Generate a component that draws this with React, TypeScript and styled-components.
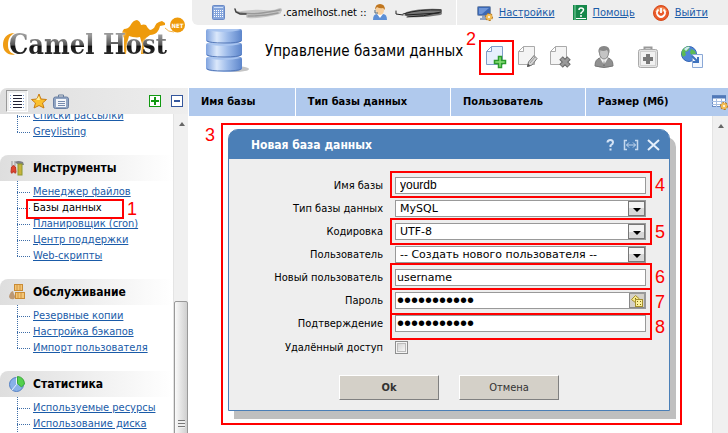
import React, { useState } from "react";
import styled, { createGlobalStyle, css } from "styled-components";

const ui = `"DejaVu Sans Condensed", "DejaVu Sans", sans-serif`;
const wide = `"DejaVu Sans", sans-serif`;

const Global = createGlobalStyle`
  *, *::before, *::after { box-sizing: border-box; }
  body { margin: 0; background: #fff; color: #000; font: 11px/16px ${ui}; }
  button { font: inherit; padding: 0; border: 0; background: none; color: inherit; cursor: pointer; }
  h1, h2, h3, ul { margin: 0; padding: 0; font-size: inherit; font-weight: inherit; list-style: none; }
  svg { display: block; flex: none; }
`;

const Page = styled.div`
  display: grid;
  grid-template-columns: 188px minmax(0, 1fr);
  grid-template-rows: 88px minmax(0, 1fr);
  column-gap: 1px;
  height: 100vh;
  overflow: hidden;
`;

/* Tutorial markers drawn over the parts they point at */
type Box = [number, number, number, number];
const Marker = styled.span<{ $box: Box }>`
  position: absolute;
  inset: ${(p) => p.$box.map((v) => `${v}px`).join(" ")};
  border: 2px solid #f00;
  pointer-events: none;
  z-index: 2;
`;
const Digit = styled.span<{ $side: "left" | "right" | "top" }>`
  position: absolute;
  color: #f00;
  font: 18px/20px "Liberation Sans", Arial, sans-serif;
  ${(p) => p.$side === "right" && css`left: 100%; top: 50%; margin: -10px 0 0 5px;`}
  ${(p) => p.$side === "left" && css`right: 100%; top: 0; margin-right: 8px;`}
  ${(p) => p.$side === "top" && css`right: 100%; top: -13px; margin-right: 5px;`}
`;
function Step({ n, box, side = "right" }: { n: number; box: Box; side?: "left" | "right" | "top" }) {
  return (
    <Marker $box={box}>
      <Digit $side={side}>{n}</Digit>
    </Marker>
  );
}

/* ---------- logo ---------- */
const Brand = styled.a`
  position: relative;
  display: flex;
  align-items: flex-end;
  padding: 0 0 27px 9px;
  text-decoration: none;
`;
const BrandText = styled.span`
  position: relative;
  font: bold 27px/32px "DejaVu Serif Condensed", "DejaVu Serif", serif;
  white-space: nowrap;
  background: linear-gradient(#999 20%, #555 50%, #111 54%, #333 85%);
  background-clip: text;
  color: transparent;
  filter: drop-shadow(0 0 1px #fff);
`;
const Camel = styled.svg`
  position: absolute;
  left: 0;
  top: 14px;
`;

function Logo() {
  return (
    <Brand href="#" aria-label="Camel Host .NET">
      <Camel width="188" height="46" viewBox="0 14 188 46">
        <path d="M15 33C6 33 3 39 3 45C3 51 8 56 15 54.500C10 53 8 50 8 45C8 39 10 35 15 33Z" fill="#ef9c14" />
        <path
          d="M122 34Q122 31 124 29Q128 29 130 26Q133 20 137 20Q140 21 141 25Q144 24 146 25Q148 29 150 30Q154 29 155 26Q156 23 159 22L162 21L165 23L165 25L160 26C159 31 156 35 150 35L146 38L144 42L144 54H141L142 44L140 37C137 38 132 37 129 36L127 44L126 54H124L124 45L124 38Z"
          fill="#ee9a0b"
        />
        <path d="M165 28Q168 32 174 32" stroke="#f4b54c" fill="none" />
        <circle cx="177.500" cy="25" r="7.500" fill="#ee9a0b" />
        <text x="177.500" y="27.500" fontSize="6" fontWeight="bold" textAnchor="middle" fill="#fff" fontFamily="DejaVu Sans Condensed">NET</text>
      </Camel>
      <BrandText>Camel Host</BrandText>
    </Brand>
  );
}

/* ---------- header ---------- */
const Header = styled.header`
  display: flex;
  flex-direction: column;
`;
const TopBar = styled.div`
  display: flex;
  gap: 1px;
  height: 25px;
  padding-left: 3px;
`;
const Account = styled.div`
  display: flex;
  align-items: center;
  flex: 0 1 264px;
  padding-left: 20px;
  background: #eee;
  border-bottom-left-radius: 6px;
  white-space: nowrap;
`;
const HostName = styled.span`
  display: flex;
  align-items: center;
  margin: 0 6px 0 8px;
`;
const Links = styled.nav`
  display: flex;
  align-items: center;
  justify-content: flex-end;
  gap: 18px;
  flex: 1;
  padding-right: 20px;
  background: #eee;
`;
const Link = styled.a`
  color: #1a5ba8;
`;
const IconLink = styled(Link)`
  display: flex;
  align-items: center;
  gap: 6px;
`;
const TitleRow = styled.div`
  display: flex;
  align-items: center;
  flex: 1;
  padding: 0 24px 11px 16px;
`;
const Title = styled.h1`
  flex: 1;
  margin-left: 12px;
  font-size: 15px;
  line-height: 20px;
  white-space: nowrap;
`;
const Tools = styled.div`
  display: flex;
  align-items: center;
  padding-top: 12px;
`;
const Tool = styled.button<{ $gap?: number }>`
  position: relative;
  display: flex;
  width: 24px;
  height: 24px;
  margin-left: ${(p) => p.$gap ?? 0}px;
`;

const Scribble = () => (
  <svg width="49" height="12" viewBox="0 0 49 12" fill="none" strokeLinecap="round">
    <path d="M8 6Q20 4 30 5T46 3M14 9Q26 10 45 5" stroke="#c6c6c6" strokeWidth="4" />
    <path d="M3 5Q14 8 28 6T46 3M14 9Q30 9 44 6" stroke="#999" strokeWidth="1.500" />
    <path d="M1 2L2 5L6 7L12 7" stroke="#444" strokeWidth="1.500" />
  </svg>
);
const DarkScribble = () => (
  <svg width="48" height="12" viewBox="0 0 48 12" fill="none" strokeLinecap="round">
    <path d="M12 7Q26 3 45 4M14 8Q28 9 45 6" stroke="#777" strokeWidth="4" />
    <path d="M1 4V7L8 8M8 7Q24 2 46 3M12 10Q28 10 46 5M10 8L44 6" stroke="#222" />
  </svg>
);
const Calculator = () => (
  <svg width="14" height="15" viewBox="0 0 14 15">
    <rect x=".5" y=".5" width="12" height="14" rx="1" fill="#86a6dc" stroke="#6a8ac6" />
    <path d="M2 2.500h9" stroke="#cfe0fa" />
    <path d="M2.500 5v8M4.500 5v8M6.500 5v8M8.500 5v8M10.500 5v8" stroke="#fff" strokeDasharray="1 1" />
  </svg>
);
const Operator = () => (
  <svg width="14" height="17" viewBox="0 0 14 17">
    <path d="M0 16Q0 10 4 10H10Q14 10 14 16Z" fill="#5d8fd6" />
    <path d="M4 10L7 14L10 10Z" fill="#fff" />
    <ellipse cx="7" cy="6" rx="4" ry="5" fill="#f7cf9d" />
    <path d="M2 6Q2 0 7 0Q12 0 12 6L10 4Q7 5 4 3Z" fill="#c0761f" />
    <path d="M2 6V9H5" stroke="#567" fill="none" />
  </svg>
);
const Gear = ({ x, y }: { x: number; y: number }) => (
  <g transform={`translate(${x} ${y})`}>
    <circle r="3" fill="#f5c566" stroke="#b9781d" strokeDasharray="2 1" strokeWidth="2" />
    <circle r="3" fill="#f3bd55" />
    <circle r="1" fill="#fff" />
  </g>
);
const Monitor = () => (
  <svg width="16" height="16" viewBox="0 0 16 16">
    <rect x=".5" y="1.500" width="13" height="9" rx="1" fill="#3b68b4" stroke="#7c8eaa" />
    <path d="M2 3H12L5 9H2Z" fill="#6d95d8" />
    <path d="M5 11H9V13H12V15H3V13H5Z" fill="#8fa3c2" />
    <Gear x={12} y={12} />
  </svg>
);
const HelpBook = () => (
  <svg width="14" height="15" viewBox="0 0 14 15">
    <rect width="14" height="15" fill="#16884a" />
    <path d="M2 0V15" stroke="#7dd39f" />
    <path d="M3 13.500H13" stroke="#fff" />
    <path d="M6 5Q6 3 8 3Q10.500 3 10.500 5Q10.500 6 8 8V9M8 10V12" stroke="#fff" strokeWidth="1.500" fill="none" />
  </svg>
);
const Power = () => (
  <svg width="16" height="16" viewBox="0 0 16 16">
    <circle cx="8" cy="8" r="7.500" fill="#ea5a2a" stroke="#d54b1c" />
    <path d="M2 7Q3 2 8 2Q13 2 14 7Z" fill="#f28a55" />
    <path d="M5.500 4.500Q3.500 6 4 8.500Q5 12 8 12Q11 12 12 8.500Q12.500 6 10.500 4.500M8 3V8" stroke="#fff" strokeWidth="1.800" fill="none" />
  </svg>
);
const Database = () => (
  <svg width="48" height="46" viewBox="0 0 48 46">
    <defs>
      <linearGradient id="cyl">
        <stop stopColor="#7fa3df" />
        <stop offset=".3" stopColor="#dbe8fb" />
        <stop offset=".6" stopColor="#9dbbea" />
        <stop offset="1" stopColor="#5c85cb" />
      </linearGradient>
    </defs>
    <ellipse cx="30" cy="41" rx="14" ry="3" fill="#c4c4c4" />
    {[29, 15, 1].map((y) => (
      <g key={y} transform={`translate(1 ${y})`}>
        <path d="M0 2Q0 0 2 0H34Q36 0 36 2V12Q33 15 18 15Q3 15 0 12Z" fill="url(#cyl)" />
        <path d="M1 1Q18 5 35 1Q33 0 31 0H5Q2 0 1 1Z" fill="#a9c5f0" />
        <path d="M1 12Q4 14 18 14Q32 14 35 12" stroke="#5377b8" fill="none" />
      </g>
    ))}
  </svg>
);
const Sheet = ({ tint, line }: { tint: string; line: string }) => (
  <path d="M7.500 1.500H18.500V19.500H2.500V6.500H7.500V1.500L2.500 6.500" fill={tint} stroke={line} strokeLinejoin="round" />
);
const NewPage = () => (
  <svg width="24" height="24" viewBox="0 0 24 24">
    <Sheet tint="#e6f0fd" line="#7f9dc8" />
    <path d="M14.500 11.500H17.500V15.500H21.500V18.500H17.500V22.500H14.500V18.500H10.500V15.500H14.500Z" fill="#8be07a" stroke="#2b9c2b" strokeWidth="1.500" />
  </svg>
);
const EditPage = () => (
  <svg width="24" height="24" viewBox="0 0 24 24">
    <Sheet tint="#f4f4f4" line="#aaa" />
    <path d="M11.500 21.500L12.500 17L18 10.500L21 13.500L16 20Z" fill="#d4d4d4" stroke="#777" />
    <path d="M14 18L19 12" stroke="#999" fill="none" />
    <path d="M11 22L12 18.500L14.500 21Z" fill="#555" />
  </svg>
);
const DeletePage = () => (
  <svg width="24" height="24" viewBox="0 0 24 24">
    <Sheet tint="#f4f4f4" line="#aaa" />
    <path d="M13 13L21 21M21 13L13 21" stroke="#666" strokeWidth="5" />
    <path d="M13.500 13.500L20.500 20.500M20.500 13.500L13.500 20.500" stroke="#999" strokeWidth="3" />
  </svg>
);
const Person = () => (
  <svg width="24" height="24" viewBox="0 0 24 24">
    <path d="M3 21Q3 14 8 13H16Q21 14 21 21Q12 24 3 21Z" fill="#919191" stroke="#777" />
    <path d="M8 13L12 20L16 13Z" fill="#f2f2f2" />
    <path d="M12 15L11 21H13Z" fill="#777" />
    <ellipse cx="12" cy="8" rx="4.500" ry="6" fill="#c4c4c4" stroke="#888" />
    <path d="M6.500 8Q5.500 1 12 1Q18.500 1 17.500 8L15 5Q11 7 8 5Z" fill="#888" />
  </svg>
);
const FirstAid = () => (
  <svg width="24" height="24" viewBox="0 0 24 24">
    <path d="M8.500 5V2.500H15.500V5" stroke="#999" strokeWidth="2" fill="none" />
    <rect x="2.500" y="4.500" width="19" height="18" rx="2" fill="#e4e4e4" stroke="#aaa" />
    <rect x="4.500" y="6.500" width="15" height="14" fill="#f1f1f1" stroke="#d0d0d0" />
    <path d="M10 9H14V12H17V16H14V19H10V16H7V12H10Z" fill="#777" />
  </svg>
);
const GlobePage = () => (
  <svg width="24" height="24" viewBox="0 0 24 24">
    <circle cx="9" cy="9" r="7.500" fill="#4f86d8" stroke="#3565b4" />
    <path d="M3 4Q7 0 10 2L8 6L5 7L6 10L3 12Q0 8 3 4ZM11 4L15 6L16 9L13 11L10 8Z" fill="#5cba54" />
    <path d="M4 4Q7 1 10 2L6 6Z" fill="#cfe6f6" />
    <path d="M12.500 9.500H22.500V22.500H12.500Z" fill="#f4f8fe" stroke="#8aa8d6" />
    <path d="M12 11L17 16M18 12V17H13" stroke="#3e72be" strokeWidth="2" fill="none" />
  </svg>
);

/* ---------- sidebar ---------- */
const Sidebar = styled.aside`
  display: flex;
  flex-direction: column;
  min-height: 0;
`;
const TabBar = styled.div`
  display: flex;
  align-items: center;
  flex: none;
  height: 26px;
  padding: 0 5px 0 6px;
  background: linear-gradient(90deg, #dedede, #eee);
  border-top-left-radius: 7px;
`;
const Tab = styled.button<{ $active?: boolean }>`
  display: grid;
  place-items: center;
  width: 22px;
  height: 22px;
  ${(p) =>
    p.$active &&
    css`
      background: #eee;
      border: 1px solid;
      border-color: #999 #fff #fff #999;
    `}
`;
const Squares = styled.div`
  display: flex;
  gap: 10px;
  margin-left: auto;
`;
const Square = styled.button<{ $color: string }>`
  display: grid;
  place-items: center;
  width: 12px;
  height: 12px;
  background: #fff;
  border: 1px solid ${(p) => p.$color};
`;
const SideBody = styled.div`
  display: flex;
  flex: 1;
  min-height: 0;
  overflow: hidden;
`;
const Tree = styled.nav`
  flex: 1;
  min-width: 0;
  margin-top: -9px;
`;
const Group = styled.section`
  margin-bottom: 15px;
`;
const GroupTitle = styled.h2`
  display: grid;
  grid-template-columns: 17px 1fr;
  justify-items: start;
  align-items: center;
  gap: 7px;
  height: 26px;
  padding-left: 9px;
  font-size: 12px;
  font-weight: bold;
  background: linear-gradient(90deg, #dedede, #fff);
  border-top-left-radius: 8px;
`;
const Items = styled.ul`
  padding: 3px 0 0 17px;
`;
const Item = styled.li<{ $open?: boolean }>`
  position: relative;
  display: flex;
  align-items: center;
  height: 16px;
  white-space: nowrap;
  &::before {
    content: "";
    width: 13px;
    margin-right: 3px;
    border-top: 1px dotted #3f6ea8;
  }
  &::after {
    content: "";
    position: absolute;
    left: 0;
    top: -3px;
    bottom: 0;
    border-left: 1px dotted #3f6ea8;
  }
  &:last-child::after {
    bottom: ${(p) => (p.$open ? "-16px" : "8px")};
  }
`;
const Current = styled(Link)`
  color: #000;
  text-decoration: none;
`;
const SideScroll = styled.div`
  display: flex;
  flex-direction: column;
  width: 15px;
  background: #f0f0f0;
  border-left: 1px solid #e4e4e4;
`;
const Arrow = styled.span`
  align-self: center;
  margin: 8px 0 0 1px;
  border: solid transparent;
  border-width: 0 3px 4px;
  border-bottom-color: #666;
`;
const Thumb = styled.span`
  display: grid;
  place-items: center;
  flex: none;
  height: 246px;
  margin-top: auto;
  margin-bottom: -114px;
  border: 1px solid #999;
  border-radius: 2px;
  background: linear-gradient(90deg, #fafafa, #e6e6e6 45%, #cfcfcf);
  &::after {
    content: "";
    width: 7px;
    height: 8px;
    background: repeating-linear-gradient(#777 0 1px, #eee 1px 3px);
  }
`;

const ListIcon = () => (
  <svg width="16" height="17" viewBox="0 0 16 17">
    <rect width="16" height="17" fill="#fff" />
    {[2, 5, 8, 11, 14].map((y) => (
      <path key={y} d={`M1 ${y}.5h1M14 ${y}.5h1`} stroke="#7b9bd0" />
    ))}
    {[2, 5, 8, 11, 14].map((y) => (
      <path key={`l${y}`} d={`M4 ${y}.5h9`} stroke="#223" />
    ))}
  </svg>
);
const StarIcon = () => (
  <svg width="16" height="16" viewBox="0 0 16 16">
    <path d="M8 1L10 6L15.500 6.500L11.500 10L13 15L8 12.500L3 15L4.500 10L.5 6.500L6 6Z" fill="#fbc02d" stroke="#c97c12" strokeLinejoin="round" />
    <path d="M8 3L9 7H5Z" fill="#fff0a0" />
  </svg>
);
const CaseIcon = () => (
  <svg width="16" height="15" viewBox="0 0 16 15">
    <path d="M5.500 3V1H10.500V3" stroke="#667c9c" fill="none" />
    <rect x=".5" y="3" width="15" height="11.500" rx="2" fill="#91a5c3" stroke="#6b80a3" />
    <rect x="3" y="5" width="10" height="8" fill="#f4f6fa" />
    <path d="M5 7.500h7M5 9.500h7M5 11.500h7" stroke="#778cae" />
  </svg>
);
const ToolsIcon = () => (
  <svg width="17" height="16" viewBox="-1 0 17 16">
    <path d="M2 1V6M5 1V6" stroke="#999" />
    <path d="M1.500 7Q3.500 4 5.500 7L6 12Q5 15 3.500 11Q2 15 1 12Z" fill="#e0452f" stroke="#b93525" />
    <path d="M5 2Q8 0 13 2L14 5H12L11 4H7Z" fill="#7d7f84" />
    <rect x="8" y="4" width="4" height="11" fill="#c9b23c" stroke="#8c9a2d" />
  </svg>
);
const CratesIcon = () => (
  <svg width="17" height="16" viewBox="0 0 17 16">
    <rect x="5.500" y=".5" width="8" height="6" fill="#f3c576" stroke="#c98b35" />
    <rect x="6.500" y="8.500" width="9" height="6" fill="#f3c576" stroke="#c98b35" />
    <path d="M8 1V6M11 1V6M9 9V14M12 9V14" stroke="#d2943f" />
    <path d="M2 8Q0 11 0 13Q1 16 5 15Q7 13 5 10L4 7Z" fill="#bb9876" />
  </svg>
);
const PieIcon = () => (
  <svg width="16" height="16" viewBox="0 0 16 16">
    <circle cx="7.500" cy="8.500" r="7" fill="#88b1e8" stroke="#5580c2" />
    <path d="M7.500 8.500L3 14M7.500 8.500V1.500" stroke="#e8f0fb" />
    <path d="M8.500 7.500V.5Q15 1 15.500 8L12.500 11Z" fill="#55d04e" stroke="#38a838" />
  </svg>
);

const groups = [
  { title: "", icon: null, items: ["Списки рассылки", "Greylisting"] },
  {
    title: "Инструменты",
    icon: <ToolsIcon />,
    items: ["Менеджер файлов", "Базы данных", "Планировщик (cron)", "Центр поддержки", "Web-скрипты"],
  },
  { title: "Обслуживание", icon: <CratesIcon />, items: ["Резервные копии", "Настройка бэкапов", "Импорт пользователя"] },
  { title: "Статистика", icon: <PieIcon />, items: ["Используемые ресурсы", "Использование диска"], open: true },
];

/* ---------- work area ---------- */
const Main = styled.main`
  display: flex;
  flex-direction: column;
  min-width: 0;
`;
const Columns = styled.table`
  flex: none;
  width: 100%;
  table-layout: fixed;
  border-collapse: collapse;
  background: #b0c9ed;
`;
const Th = styled.th<{ $w?: string }>`
  width: ${(p) => p.$w ?? "auto"};
  height: 28px;
  padding: 0 0 0 12px;
  font-size: 11px;
  text-align: left;
  white-space: nowrap;
  & + & {
    border-left: 1px solid #fff;
  }
`;
const ThTool = styled.th`
  width: 16px;
  padding: 0;
`;
const Work = styled.div`
  display: flex;
  flex: 1;
  min-height: 0;
`;
const Canvas = styled.div`
  flex: 1;
  padding: 13px 3px 14px 0;
`;
const MainScroll = styled(SideScroll)`
  width: 16px;
`;

const Dialog = styled.form`
  position: relative;
  width: 100%;
  max-width: 442px;
  margin: 0 auto;
  background: #eee;
  border: 1px solid #4b7fb7;
  border-radius: 10px 10px 0 0;
  box-shadow: 6px 8px 0 #bfbfbf;
`;
const DialogHead = styled.div`
  display: flex;
  align-items: center;
  gap: 8px;
  height: 29px;
  padding: 0 9px 0 22px;
  color: #fff;
  background: #4b7fb7;
  border-radius: 8px 8px 0 0;
`;
const DialogTitle = styled.h2`
  flex: 1;
  font-size: 12px;
  font-weight: bold;
`;
const Fields = styled.div`
  display: grid;
  gap: 6px;
  padding: 18px 23px 18px 0;
`;
const Row = styled.div<{ $tall?: boolean }>`
  display: grid;
  grid-template-columns: 154px minmax(0, 1fr);
  gap: 12px;
  align-items: center;
  height: ${(p) => (p.$tall ? 19 : 17)}px;
`;
const Label = styled.label`
  text-align: right;
  white-space: nowrap;
`;
const Control = styled.div`
  position: relative;
  display: flex;
  height: 17px;
  background: #fff;
  border: 1px solid #999;
`;
const Plain = styled.div`
  display: flex;
`;
const entry = css`
  flex: 1;
  min-width: 0;
  height: 15px;
  padding: 0;
  border: 0;
  outline: 0;
  background: none;
  color: #000;
  font: 11px/15px ${wide};
`;
const Input = styled.input<{ $narrow?: boolean }>`
  ${entry}
  padding-left: ${(p) => (p.$narrow ? 4 : 1)}px;
  ${(p) => p.$narrow && css`font: 12px/15px "Liberation Sans", Arial, sans-serif;`}
`;
const Secret = styled.input.attrs({ type: "password" })`
  ${entry}
  padding-left: 1px;
  font: 20px/15px "Liberation Sans", Arial, sans-serif;
`;
const Select = styled.select`
  ${entry}
  appearance: none;
  padding-left: 4px;
`;
const DropMark = styled.span`
  display: grid;
  place-items: center;
  width: 17px;
  border: 1px solid #777;
  background: linear-gradient(#f4f4f4 50%, #d8d8d8 50%);
  margin-left: -17px;
  pointer-events: none;
  &::after {
    content: "";
    margin-top: 3px;
    border: solid transparent;
    border-width: 4px 4px 0;
    border-top-color: #000;
  }
`;
const Generate = styled.button`
  display: grid;
  place-items: center;
  width: 16px;
  background: #d4d0c8;
  border: 1px solid;
  border-color: #999 #999 #888 #888;
`;
const Check = styled.input`
  appearance: none;
  width: 13px;
  height: 13px;
  margin: 0;
  border: 1px solid #8e8f8f;
  background: linear-gradient(135deg, #ccc, #fff);
  box-shadow: inset 0 0 0 1px #f4f4f4, inset 0 0 0 2px #bbb;
  &:checked {
    background: #4b7fb7;
  }
`;
const Buttons = styled.div`
  display: flex;
  justify-content: center;
  gap: 20px;
  padding-bottom: 10px;
`;
const Action = styled.button<{ $strong?: boolean }>`
  width: 100px;
  height: 25px;
  color: #333;
  font-weight: ${(p) => (p.$strong ? "bold" : "normal")};
  background: #d4d0c8;
  border: 1px solid;
  border-color: #fff #808080 #808080 #fff;
`;

const HelpMark = () => (
  <svg width="9" height="12" viewBox="0 0 9 12" fill="none" stroke="#d5e4f6" strokeWidth="2">
    <path d="M1.500 3.500Q1.500 1 4.500 1Q7 1 7 3.500Q7 5 4.500 6.500V8M4.500 9.500V11.500" />
  </svg>
);
const Stretch = () => (
  <svg width="16" height="12" viewBox="0 0 16 12" fill="none" stroke="#c5d9f0">
    <path d="M4 1.500H1.500V10.500H4M12 1.500H14.500V10.500H12" strokeWidth="1.500" />
    <path d="M3.500 6H12.500M6 3.500L3.500 6L6 8.500M10 3.500L12.500 6L10 8.500" />
  </svg>
);
const Close = () => (
  <svg width="13" height="12" viewBox="0 0 13 12">
    <path d="M1 1L12 11M12 1L1 11" stroke="#e5effb" strokeWidth="2" />
  </svg>
);
const Dice = () => (
  <svg width="12" height="12" viewBox="0 0 12 12">
    <path d="M4.500 .5L8.500 4L5 8L.5 4.500Z" fill="#f7e98b" stroke="#a58f2d" />
    <rect x="4.500" y="4.500" width="7" height="7" fill="#fbf09b" stroke="#a58f2d" />
    <path d="M6 6.500h1M9 6.500h1M6 9.500h1M9 9.500h1M4 3.500h1" stroke="#7d6914" />
  </svg>
);
const GridGear = () => (
  <svg width="16" height="16" viewBox="0 0 16 16">
    <rect x=".5" y="1.500" width="13" height="11" fill="#fff" stroke="#6c8fc6" />
    <path d="M0 3H14" stroke="#5078b8" strokeWidth="3" />
    <path d="M0 7.500H14M0 10.500H14M4.500 4V13M9.500 4V13" stroke="#a8bfe2" />
    <Gear x={12} y={12} />
  </svg>
);

function Choice({ id, value }: { id: string; value: string }) {
  return (
    <>
      <Select id={id} defaultValue={value}>
        <option>{value}</option>
      </Select>
      <DropMark />
    </>
  );
}

export default function App() {
  const [remote, setRemote] = useState(false);
  return (
    <>
      <Global />
      <Page>
        <Logo />
        <Header>
          <TopBar>
            <Account>
              <Calculator />
              <HostName>
                <Scribble />
                .camelhost.net ::
              </HostName>
              <Operator />
              <HostName>
                <DarkScribble />
              </HostName>
            </Account>
            <Links>
              <IconLink href="#settings"><Monitor />Настройки</IconLink>
              <IconLink href="#help"><HelpBook />Помощь</IconLink>
              <IconLink href="#logout"><Power />Выйти</IconLink>
            </Links>
          </TopBar>
          <TitleRow>
            <Database />
            <Title>Управление базами данных</Title>
            <Tools>
              <Tool aria-label="Создать">
                <NewPage />
                <Step n={2} box={[-5, -6, -6, -5]} side="top" />
              </Tool>
              <Tool $gap={8} aria-label="Изменить"><EditPage /></Tool>
              <Tool $gap={8} aria-label="Удалить"><DeletePage /></Tool>
              <Tool $gap={20} aria-label="Пользователи"><Person /></Tool>
              <Tool $gap={20} aria-label="Восстановить"><FirstAid /></Tool>
              <Tool $gap={20} aria-label="Перейти"><GlobePage /></Tool>
            </Tools>
          </TitleRow>
        </Header>

        <Sidebar>
          <TabBar>
            <Tab $active aria-label="Список"><ListIcon /></Tab>
            <Tab aria-label="Избранное"><StarIcon /></Tab>
            <Tab aria-label="Задачи"><CaseIcon /></Tab>
            <Squares>
              <Square $color="#119911" aria-label="Развернуть">
                <svg width="8" height="8"><path d="M0 4H8M4 0V8" stroke="#119911" strokeWidth="2" /></svg>
              </Square>
              <Square $color="#34569c" aria-label="Свернуть">
                <svg width="8" height="8"><path d="M1 4H7" stroke="#34569c" strokeWidth="2" /></svg>
              </Square>
            </Squares>
          </TabBar>
          <SideBody>
            <Tree>
              {groups.map((g) => (
                <Group key={g.title}>
                  {g.title && <GroupTitle>{g.icon}{g.title}</GroupTitle>}
                  <Items>
                    {g.items.map((name) => (
                      <Item key={name} $open={g.open}>
                        {name === "Базы данных" ? (
                          <>
                            <Current href="#databases" aria-current="page">{name}</Current>
                            <Step n={1} box={[-1, 49, -3, 9]} />
                          </>
                        ) : (
                          <Link href="#">{name}</Link>
                        )}
                      </Item>
                    ))}
                  </Items>
                </Group>
              ))}
            </Tree>
            <SideScroll><Arrow /><Thumb /></SideScroll>
          </SideBody>
        </Sidebar>

        <Main>
          <Columns>
            <thead>
              <tr>
                <Th $w="19.7%">Имя базы</Th>
                <Th $w="28.8%">Тип базы данных</Th>
                <Th $w="25%">Пользователь</Th>
                <Th>Размер (Мб)</Th>
                <ThTool><GridGear /></ThTool>
              </tr>
            </thead>
          </Columns>
          <Work>
            <Canvas>
              <Dialog onSubmit={(e) => e.preventDefault()}>
                <Step n={3} box={[-7, -13, -15, -8]} side="left" />
                <DialogHead>
                  <DialogTitle>Новая база данных</DialogTitle>
                  <button type="button" aria-label="Справка"><HelpMark /></button>
                  <button type="button" aria-label="Растянуть"><Stretch /></button>
                  <button type="button" aria-label="Закрыть"><Close /></button>
                </DialogHead>
                <Fields>
                  <Row>
                    <Label htmlFor="name">Имя базы</Label>
                    <Control><Input id="name" $narrow defaultValue="yourdb" /><Step n={4} box={[-7, -7, -5, -6]} /></Control>
                  </Row>
                  <Row>
                    <Label htmlFor="type">Тип базы данных</Label>
                    <Control><Choice id="type" value="MySQL" /></Control>
                  </Row>
                  <Row>
                    <Label htmlFor="charset">Кодировка</Label>
                    <Control><Choice id="charset" value="UTF-8" /><Step n={5} box={[-6, -7, -6, -6]} /></Control>
                  </Row>
                  <Row>
                    <Label htmlFor="user">Пользователь</Label>
                    <Control><Choice id="user" value="-- Создать нового пользователя --" /></Control>
                  </Row>
                  <Row>
                    <Label htmlFor="newuser">Новый пользователь</Label>
                    <Control><Input id="newuser" defaultValue="username" /><Step n={6} box={[-7, -7, -5, -6]} /></Control>
                  </Row>
                  <Row>
                    <Label htmlFor="pass">Пароль</Label>
                    <Control>
                      <Secret id="pass" defaultValue="secretword1" />
                      <Generate type="button" aria-label="Сгенерировать"><Dice /></Generate>
                      <Step n={7} box={[-5, -7, -7, -6]} />
                    </Control>
                  </Row>
                  <Row>
                    <Label htmlFor="confirm">Подтверждение</Label>
                    <Control>
                      <Secret id="confirm" defaultValue="secretword1" />
                      <Step n={8} box={[-3, -7, -9, -6]} />
                    </Control>
                  </Row>
                  <Row $tall>
                    <Label htmlFor="remote">Удалённый доступ</Label>
                    <Plain><Check id="remote" type="checkbox" checked={remote} onChange={(e) => setRemote(e.target.checked)} /></Plain>
                  </Row>
                </Fields>
                <Buttons>
                  <Action type="submit" $strong>Ok</Action>
                  <Action type="button">Отмена</Action>
                </Buttons>
              </Dialog>
            </Canvas>
            <MainScroll><Arrow /></MainScroll>
          </Work>
        </Main>
      </Page>
    </>
  );
}
